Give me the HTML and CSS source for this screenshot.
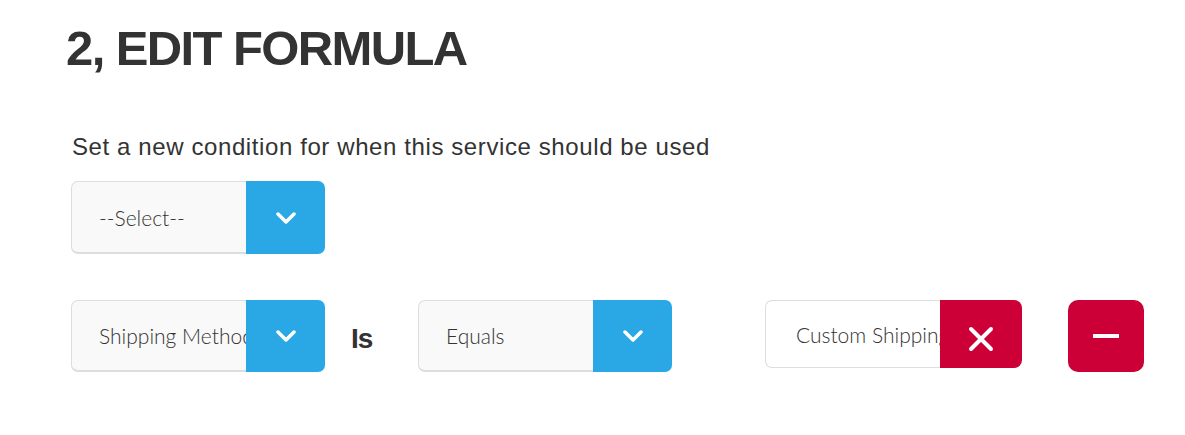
FILE: index.html
```html
<!DOCTYPE html>
<html lang="en">

<head>
	<meta charset="UTF-8">
	<meta name="viewport" content="width=device-width, initial-scale=1.0">
	<title>Edit Formula</title>
	<link rel="stylesheet" href="styles.css">
</head>

<body>
	<div class="container">
		<h1 class="title">2, EDIT FORMULA</h1>
		<p class="description">Set a new condition for when this service should be used</p>

		<div class="row">
			<div class="select">
				<span class="select-value">--Select--</span>
				<span class="select-btn">
					<svg width="20" height="12" viewBox="0 0 20 12">
						<path d="M2 2 L10 10 L18 2" fill="none" stroke="#fff" stroke-width="3.5" stroke-linecap="round" stroke-linejoin="round" />
					</svg>
				</span>
			</div>
		</div>

		<div class="row condition">
			<div class="select">
				<span class="select-value">Shipping Method</span>
				<span class="select-btn">
					<svg width="20" height="12" viewBox="0 0 20 12">
						<path d="M2 2 L10 10 L18 2" fill="none" stroke="#fff" stroke-width="3.5" stroke-linecap="round" stroke-linejoin="round" />
					</svg>
				</span>
			</div>
			<strong class="is-label">Is</strong>
			<div class="select">
				<span class="select-value">Equals</span>
				<span class="select-btn">
					<svg width="20" height="12" viewBox="0 0 20 12">
						<path d="M2 2 L10 10 L18 2" fill="none" stroke="#fff" stroke-width="3.5" stroke-linecap="round" stroke-linejoin="round" />
					</svg>
				</span>
			</div>
			<div class="value-input">
				<span class="input-text">Custom Shipping</span>
				<span class="clear-btn">
					<svg width="26" height="26" viewBox="0 0 26 26">
						<path d="M3 3 L23 23 M23 3 L3 23" fill="none" stroke="#fff" stroke-width="4" stroke-linecap="round" />
					</svg>
				</span>
			</div>
			<button class="remove-btn">
				<svg width="26" height="4" viewBox="0 0 26 4">
					<rect x="0" y="0" width="26" height="4" fill="#fff" />
				</svg>
			</button>
		</div>
	</div>
</body>

</html>
```

FILE: styles.css
```css
body {
	margin: 0;
	background-color: #fff;
	color: #333;
	font-family: "Liberation Sans", Arial, sans-serif;
}

.container {
	padding: 18px 0 0 71px;
}

.title {
	margin: 0 0 0 -5px;
	font-size: 49px;
	line-height: 60px;
	font-weight: bold;
	letter-spacing: -1.6px;
	color: #333;
}

.description {
	margin: 54px 0 19px 1px;
	font-size: 24px;
	line-height: 30px;
	letter-spacing: 0.6px;
	color: #333;
}

.row {
	display: flex;
	align-items: flex-start;
}

.condition {
	margin-top: 46px;
}

.select {
	display: flex;
	width: 254px;
	height: 73px;
}

.condition .select {
	height: 72px;
}

.select-value,
.input-text {
	flex: 1;
	display: flex;
	align-items: center;
	padding-left: 27px;
	overflow: hidden;
	white-space: nowrap;
	background-color: #f9f9f9;
	border: 1px solid #ddd;
	border-bottom-width: 2px;
	border-right: none;
	border-radius: 7px 0 0 7px;
	font-family: "Lato", sans-serif;
	font-weight: 300;
	font-size: 21px;
	color: #333;
}

.select-btn {
	width: 79px;
	display: flex;
	align-items: center;
	justify-content: center;
	background-color: #29a8e5;
	border-radius: 0 7px 7px 0;
}

.is-label {
	width: 93px;
	box-sizing: border-box;
	padding-left: 26px;
	margin-top: 24px;
	font-size: 28px;
	line-height: 30px;
	letter-spacing: -1px;
}

.value-input {
	display: flex;
	width: 257px;
	height: 68px;
	margin-left: 93px;
}

.input-text {
	background-color: #fff;
	padding-left: 30px;
	border-bottom-width: 1px;
}

.clear-btn {
	width: 82px;
	display: flex;
	align-items: center;
	justify-content: center;
	padding-top: 10px;
	box-sizing: border-box;
	background-color: #cc0036;
	border-radius: 0 8px 8px 0;
}

.remove-btn {
	width: 76px;
	height: 72px;
	margin-left: 46px;
	border: none;
	border-radius: 10px;
	background-color: #cc0036;
	display: flex;
	align-items: center;
	justify-content: center;
	cursor: pointer;
}
```
